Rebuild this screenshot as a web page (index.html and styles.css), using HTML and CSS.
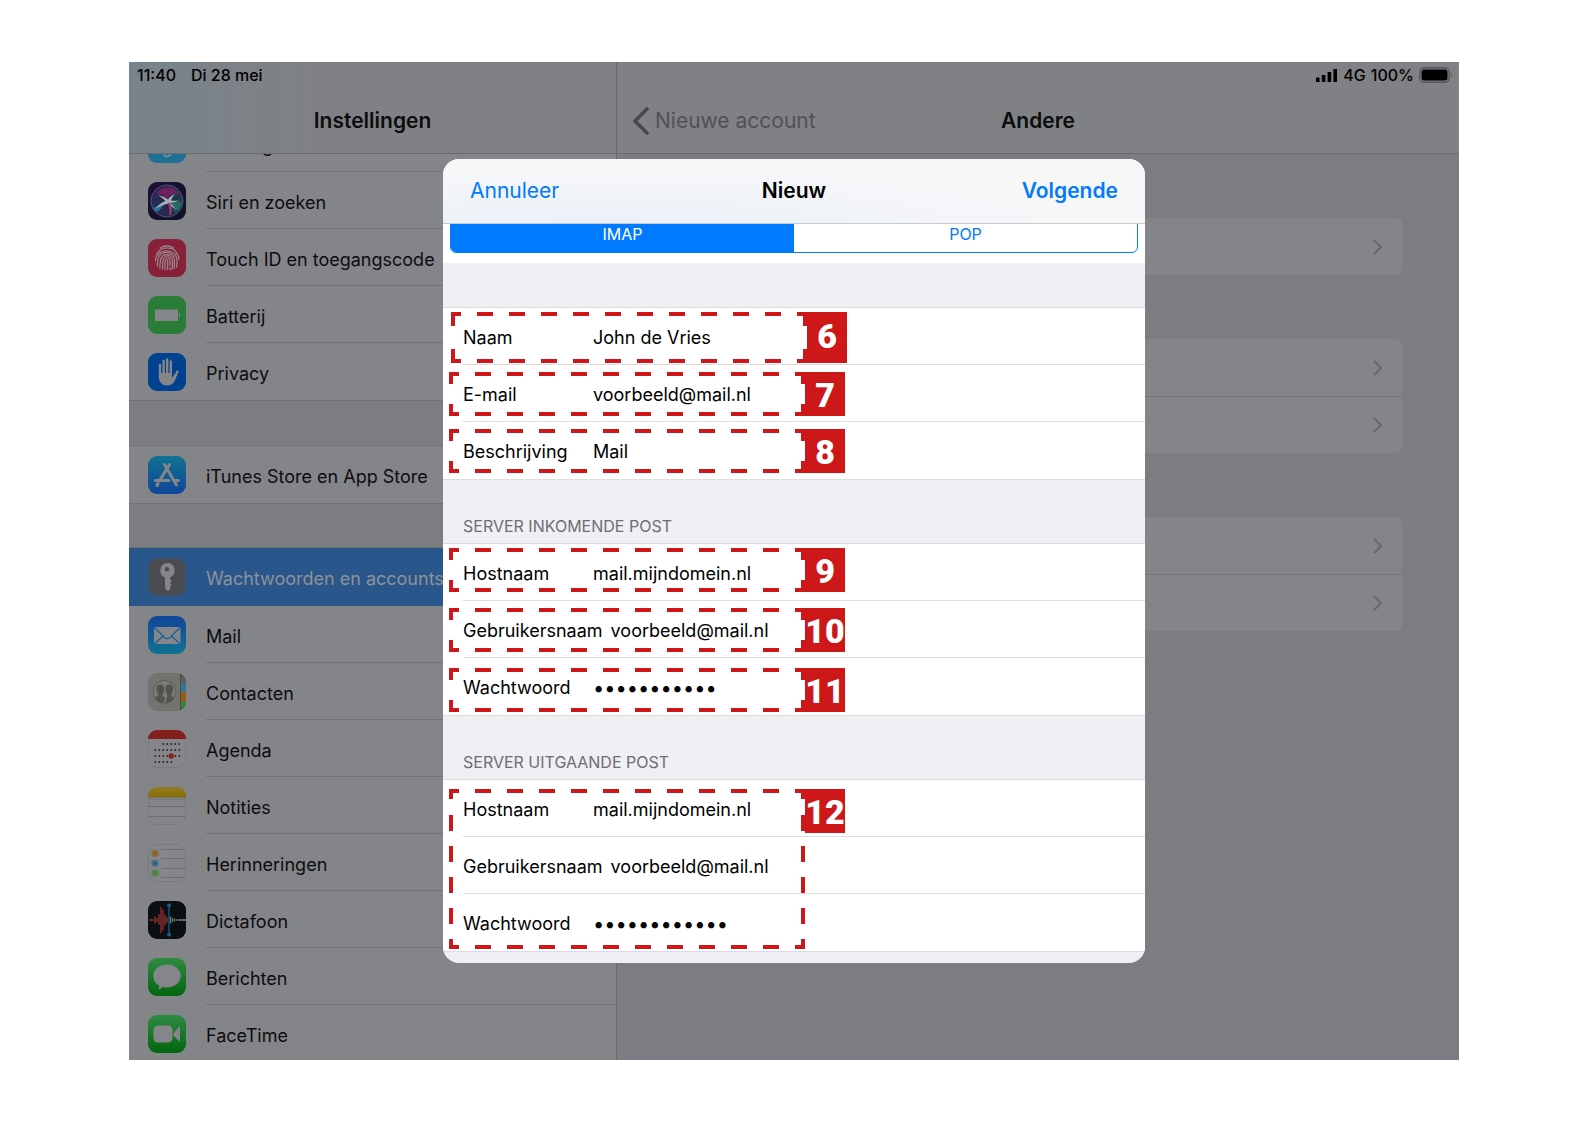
FILE: index.html
```html
<!DOCTYPE html>
<html lang="nl">
<head>
<meta charset="utf-8">
<meta name="viewport" content="width=device-width, initial-scale=1">
<title>Instellingen</title>
<link rel="stylesheet" href="styles.css">
</head>
<body>
<svg class="defs" aria-hidden="true">
  <defs>
    <linearGradient id="g-store" x1="0" y1="0" x2="0" y2="1"><stop offset="0" stop-color="#0f7391"/><stop offset="1" stop-color="#10459b"/></linearGradient>
    <linearGradient id="g-mail" x1="0" y1="0" x2="0" y2="1"><stop offset="0" stop-color="#10459b"/><stop offset="1" stop-color="#0f7391"/></linearGradient>
    <linearGradient id="g-green" x1="0" y1="0" x2="0" y2="1"><stop offset="0" stop-color="#2f8b42"/><stop offset="1" stop-color="#02650f"/></linearGradient>
    <linearGradient id="g-siri" x1="0" y1="0" x2="1" y2="1"><stop offset="0" stop-color="#1f0f35"/><stop offset="1" stop-color="#0a1326"/></linearGradient>
    <linearGradient id="g-orb" x1="0" y1="0" x2="1" y2="0"><stop offset="0" stop-color="#27407a"/><stop offset=".5" stop-color="#3a3560"/><stop offset="1" stop-color="#1c605c"/></linearGradient>
    <linearGradient id="g-note" x1="0" y1="0" x2="0" y2="1"><stop offset="0" stop-color="#8f7a26"/><stop offset="1" stop-color="#8c6f00"/></linearGradient>
    <clipPath id="tile"><rect width="38" height="38" rx="9"/></clipPath>
    <g id="box-small">
      <path d="M2 2H354M2 42H354" stroke-dasharray="16 16" stroke-dashoffset="8"/>
      <path d="M2 0V12M2 32V44M354 0V12M354 32V44M0 2H4M0 42H4M352 2H356M352 42H356"/>
    </g>
    <g id="box-first">
      <path d="M2 2H354M2 49H354" stroke-dasharray="16 16" stroke-dashoffset="8"/>
      <path d="M2 0V14M2 37V51M354 0V14M354 37V51"/>
    </g>
    <g id="box-large">
      <path d="M2 2H354M2 158H354" stroke-dasharray="16 16" stroke-dashoffset="8"/>
      <path d="M2 0V10M2 26V42M2 57V73M2 88V104M2 119V135M2 150V160M354 0V10M354 26V42M354 57V73M354 88V104M354 119V135M354 150V160"/>
    </g>
  </defs>
</svg>

<main class="device">
  <div class="status" role="status">
    <span>11:40</span><span>Di 28 mei</span>
    <span class="status-right">
      <svg width="23" height="14" viewBox="0 0 23 14"><path d="M1 9.500h3.600v4.500H1zM6.800 7h3.600v7H6.800zM12.600 4h3.600v10h-3.600zM18.400 1H22v13h-3.600z"/></svg>
      <span>4G</span><span>100%</span>
      <svg width="34" height="16" viewBox="0 0 34 16"><rect x=".8" y=".8" width="29.400" height="14.400" rx="4" fill="none" stroke="#55565a" stroke-width="1.400"/><rect x="2.500" y="2.500" width="26" height="11" rx="2.500"/><path d="M31.800 5.500q2 2.500 0 5z" fill="#55565a"/></svg>
    </span>
  </div>

  <section class="sidebar">
    <header class="bar bar-tint"><h1>Instellingen</h1></header>
    <ul class="menu">
      <li class="cut"><a href="#"><svg class="icon" viewBox="0 0 38 38"><rect width="38" height="38" rx="9" fill="#1f7094"/><circle cx="19" cy="28" r="3.500" fill="none" stroke="#85929a" stroke-width="1.500"/></svg><span>Achtergrond</span></a></li>
      <li><a href="#"><svg class="icon" viewBox="0 0 38 38"><rect width="38" height="38" rx="9" fill="url(#g-siri)"/><circle cx="19" cy="19" r="15.500" fill="url(#g-orb)" opacity=".6"/><path d="M8 12C13 4 27 2 33 14C27 9 20 12 19 18C15 12 11 11 8 12z" fill="#7c2060" opacity=".85"/><path d="M4 26C9 25 14 21 19 17C14 26 11 30 8 30z" fill="#2a7d9c" opacity=".8"/><path d="M20 17C24 20 29 22 34 19C33 26 30 29 27 30C26 25 23 21 20 17z" fill="#27776f" opacity=".8"/><path d="M10 13Q16 14 20 17.500Q22 14 27 12Q23.500 15.500 23 18.500Q28 19 32 18.500Q27 21 22.500 20.500Q24.500 24 28 27Q22.500 24.500 20.500 21.500Q15 22.500 7 27Q12 21 17.500 19Q14 15.500 10 13z" fill="#a3b0b8"/><path d="M20.500 21Q22.500 26 22 33Q24.500 29 22 21z" fill="#a33b80" stroke="#a33b80"/><circle cx="19" cy="19" r="16" fill="none" stroke="#5c5578" stroke-width="1"/></svg><span>Siri en zoeken</span></a></li>
      <li><a href="#"><svg class="icon" viewBox="0 0 38 38"><rect width="38" height="38" rx="9" fill="#89203a"/><g fill="none" stroke="#94868c" stroke-width="1.300" stroke-linecap="round"><path d="M12.500 9Q19 4.500 25.500 9"/><path d="M8.500 15.500C13 6.500 26 7 29.500 15.500Q31 18.500 31 20.500"/><path d="M7.500 21.500C8 9 29 8 29 22Q29 25.500 28.500 28"/><path d="M9.500 27C9 24 10 21 10 20.500C11.500 10.500 26.500 11 26.500 22Q26.500 27 26 29.500"/><path d="M12 29C11.500 26 12.500 23 12.500 21.500C13.500 13.500 24.500 14 24.500 22Q24.500 26 24 30"/><path d="M14.500 30Q14.500 25 15 21.500C16 16.500 22 16.500 22 22V26"/><path d="M17 30.500Q17 25 17.300 22C17.700 19.500 19.700 20 19.700 22Q19.700 27 19.500 30.500"/><path d="M22 29V30.500"/></g></svg><span>Touch ID en toegangscode</span></a></li>
      <li><a href="#"><svg class="icon" viewBox="0 0 38 38"><rect width="38" height="38" rx="9" fill="#297d39"/><path d="M7 13.500h23v11.500H7zM31 17q2.200 2.200 0 4.500z" fill="#85868a"/></svg><span>Batterij</span></a></li>
      <li class="last"><a href="#"><svg class="icon" viewBox="0 0 38 38"><rect width="38" height="38" rx="9" fill="#004190"/><g stroke="#85868a" stroke-width="2.400" stroke-linecap="round" fill="none"><path d="M12 12V22M15.600 8V21M19.200 6.500V21M22.800 8.500V21M29.500 18.500L26 26"/></g><path d="M10.800 20H24V25L27 20.500L28.500 21.500C27.500 28 25 32.500 19 32.500C13.500 32.500 10.800 28 10.800 24z" fill="#85868a"/></svg><span>Privacy</span></a></li>
      <li class="gap gap-store"></li>
      <li class="last"><a href="#"><svg class="icon" viewBox="0 0 38 38"><rect width="38" height="38" rx="9" fill="url(#g-store)"/><g stroke="#85868a" stroke-width="3" stroke-linecap="round" fill="none"><path d="M21.500 8.500L12 24M16.500 8.500L28.500 29M7.500 24.500H21M26.500 24.500H30.500"/><path d="M10 27.500L9 29.500"/></g></svg><span>iTunes Store en App Store</span></a></li>
      <li class="gap"></li>
      <li class="selected"><a href="#" aria-current="page"><svg class="icon" viewBox="0 0 38 38"><rect x=".5" y=".5" width="37" height="37" rx="9" fill="#4a4b50" stroke="#40526a"/><path fill-rule="evenodd" d="M19 5a7.500 7.500 0 0 1 3 14.400V21l1.800 2-1.800 2 1.800 2-1.800 2 .5 2-2.500 2-3-2.500V19.400A7.500 7.500 0 0 1 19 5zM19 9a2.300 2.300 0 1 0 .01 0z" fill="#85868a"/></svg><span>Wachtwoorden en accounts</span></a></li>
      <li><a href="#"><svg class="icon" viewBox="0 0 38 38"><rect width="38" height="38" rx="9" fill="url(#g-mail)"/><rect x="6" y="11" width="26.500" height="17" rx="2" fill="#85868a"/><path d="M7 12L16.500 21.500Q19.200 24 22 21.500L31.500 12M7 27.500L15 20M31.500 27.500L23.500 20" fill="none" stroke="#14609a" stroke-width="1.100"/></svg><span>Mail</span></a></li>
      <li><a href="#"><svg class="icon" viewBox="0 0 38 38"><g clip-path="url(#tile)"><path fill="#747370" d="M0 0h38v38H0z"/><path fill="#5d5c59" d="M32.500 0H38v10h-5.500z"/><path fill="#2f7795" d="M33 10h5v9h-5z"/><path fill="#96600a" d="M33 19.500h5v9h-5z"/><path fill="#2a823b" d="M33 29h5v9h-5z"/><path fill="#4c4b49" d="M32 0h1v38h-1z"/></g><circle cx="16.500" cy="19" r="11.500" fill="#7b7a77" stroke="#5b5a58" stroke-width="1"/><g fill="#53524f"><path d="M12 11.500c3 0 4.500 2 4 5.500-.3 2.500-1.500 3.500-1.500 5 0 1.700 2 2 3 3l-2 4.500C11 30 8 27.500 7 24.500c1.500-1 3.500-1.200 3.500-2.500 0-1.500-1.700-2.500-2-5-.5-3.500 1-5.500 3.500-5.500z"/><path d="M21 11.500c3 0 4.500 2 4 5.500-.3 2.500-1.500 3.500-1.500 5 0 1 1.500 1.700 2.500 2.500-1.500 3-4.500 5.500-8.500 5.500l1-4 1-3c0-1.500-1.700-3-2-6-.3-3.500 1-5.500 3.500-5.500z"/></g></svg><span>Contacten</span></a></li>
      <li><a href="#"><svg class="icon" viewBox="0 0 38 38"><rect x=".5" y=".5" width="37" height="37" rx="9" fill="#85868a" stroke="#797a7e"/><path d="M0 9a9 9 0 0 1 9-9h20a9 9 0 0 1 9 9z" fill="#83201c"/><g stroke="#17181a" stroke-width="1.600" stroke-dasharray="1.600 2.400" fill="none"><path d="M14.500 14h18M6.500 20h26M6.500 26h26M6.500 32h18"/></g><circle cx="23.200" cy="26" r="2.700" fill="#90201c"/></svg><span>Agenda</span></a></li>
      <li><a href="#"><svg class="icon" viewBox="0 0 38 38"><rect x=".5" y=".5" width="37" height="37" rx="9" fill="#85868a" stroke="#797a7e"/><path d="M0 10V9a9 9 0 0 1 9-9h20a9 9 0 0 1 9 9v1z" fill="url(#g-note)"/><path d="M0 10.500H38M0 19.500H38M0 29.500H38" stroke="#6d6e72"/><path d="M1 12.500H38" stroke="#6d6e72" stroke-dasharray="1 1"/></svg><span>Notities</span></a></li>
      <li><a href="#"><svg class="icon" viewBox="0 0 38 38"><rect x=".5" y=".5" width="37" height="37" rx="9" fill="#85868a" stroke="#797a7e"/><path d="M13.500 5.500H37M13.500 14.500H38M13.500 24.500H38M13.500 33.500H36" stroke="#6d6e72"/><g><circle cx="7" cy="9.500" r="2.700" fill="#915b14" stroke="#876e48" stroke-width="2"/><circle cx="7" cy="19.300" r="2.700" fill="#14618c" stroke="#4a7288" stroke-width="2"/><circle cx="7" cy="29" r="2.700" fill="#3b8c2a" stroke="#5b8453" stroke-width="2"/></g></svg><span>Herinneringen</span></a></li>
      <li><a href="#"><svg class="icon" viewBox="0 0 38 38"><rect width="38" height="38" rx="9" fill="#0c0f12"/><path d="M1 19h3M5 18v2M7 15.500v7M9 17v4M11 13v11M13 6v26M15 9v20M17 13.500v11M19 16v6" stroke="#8a2f2d" stroke-width="1.400" fill="none"/><path d="M22.500 15.500v7M24.500 17v4M26.500 17.500v3M28.500 18v2M30 19h8M36 18v2" stroke="#77787b" stroke-width="1.300" fill="none"/><path d="M21 4.500v29" stroke="#12608f" stroke-width="1.300"/><circle cx="21" cy="4.500" r="2" fill="#12608f"/><circle cx="21" cy="33.500" r="2" fill="#12608f"/></svg><span>Dictafoon</span></a></li>
      <li><a href="#"><svg class="icon" viewBox="0 0 38 38"><rect width="38" height="38" rx="9" fill="url(#g-green)"/><path d="M19 6.500c7.700 0 13.700 5 13.700 11.500S26.700 29.500 19 29.500c-1.500 0-3-.2-4.300-.5-1.200 1.300-3 2.200-5 2.500 1-.9 1.700-2.200 1.800-3.700C7.700 25.700 5.300 22.200 5.300 18 5.300 11.500 11.300 6.500 19 6.500z" fill="#85868a"/></svg><span>Berichten</span></a></li>
      <li class="bottom"><a href="#"><svg class="icon" viewBox="0 0 38 38"><rect width="38" height="38" rx="9" fill="url(#g-green)"/><rect x="5.500" y="10.500" width="19" height="17" rx="4.500" fill="#85868a"/><path d="M25.500 18L31 12q1-.8 1 .8V25.200q0 1.600-1 .8L25.500 20.500z" fill="#85868a"/></svg><span>FaceTime</span></a></li>
    </ul>
  </section>

  <section class="detail">
    <header class="bar">
      <a class="back" href="#"><svg width="18" height="28" viewBox="0 0 18 28"><path d="M15 2L3 14L15 26" fill="none" stroke="#47484b" stroke-width="3.600" stroke-linecap="round" stroke-linejoin="round"/></svg>Nieuwe account</a>
      <h2>Andere</h2>
    </header>
    <div class="cards">
      <div class="card"><a href="#" aria-label="Open"><svg class="chev" viewBox="0 0 12 18"><path d="M2 2L9 9L2 16"/></svg></a></div>
      <div class="card"><a href="#" aria-label="Open"><svg class="chev" viewBox="0 0 12 18"><path d="M2 2L9 9L2 16"/></svg></a><a href="#" aria-label="Open"><svg class="chev" viewBox="0 0 12 18"><path d="M2 2L9 9L2 16"/></svg></a></div>
      <div class="card"><a href="#" aria-label="Open"><svg class="chev" viewBox="0 0 12 18"><path d="M2 2L9 9L2 16"/></svg></a><a href="#" aria-label="Open"><svg class="chev" viewBox="0 0 12 18"><path d="M2 2L9 9L2 16"/></svg></a></div>
    </div>
  </section>

  <form class="modal" role="dialog" aria-labelledby="dlg-title">
    <header class="modal-bar">
      <button type="button">Annuleer</button>
      <h2 id="dlg-title">Nieuw</h2>
      <button type="button" class="next">Volgende</button>
    </header>
    <div class="segment-wrap">
      <div class="segment"><button type="button" class="on" aria-pressed="true">IMAP</button><button type="button" aria-pressed="false">POP</button></div>
    </div>

    <div class="group first">
      <div class="row"><label for="name">Naam</label><input id="name" type="text" value="John de Vries"></div>
      <div class="row"><label for="mail">E-mail</label><input id="mail" type="text" value="voorbeeld@mail.nl"></div>
      <div class="row"><label for="desc">Beschrijving</label><input id="desc" type="text" value="Mail"></div>
      <div class="note note-6"><svg width="356" height="51"><use href="#box-first"/></svg><b>6</b></div>
      <div class="note note-7"><svg width="356" height="44"><use href="#box-small"/></svg><b>7</b></div>
      <div class="note note-8"><svg width="356" height="44"><use href="#box-small"/></svg><b>8</b></div>
    </div>

    <h3>Server inkomende post</h3>
    <div class="group">
      <div class="row"><label for="in-host">Hostnaam</label><input id="in-host" type="text" value="mail.mijndomein.nl"></div>
      <div class="row"><label for="in-user">Gebruikersnaam</label><input id="in-user" type="text" value="voorbeeld@mail.nl"></div>
      <div class="row"><label for="in-pass">Wachtwoord</label><input id="in-pass" type="password" value="wachtwoord1"></div>
      <div class="note note-9"><svg width="356" height="44"><use href="#box-small"/></svg><b>9</b></div>
      <div class="note note-10"><svg width="356" height="44"><use href="#box-small"/></svg><b>10</b></div>
      <div class="note note-11"><svg width="356" height="44"><use href="#box-small"/></svg><b>11</b></div>
    </div>

    <h3>Server uitgaande post</h3>
    <div class="group">
      <div class="row"><label for="out-host">Hostnaam</label><input id="out-host" type="text" value="mail.mijndomein.nl"></div>
      <div class="row"><label for="out-user">Gebruikersnaam</label><input id="out-user" type="text" value="voorbeeld@mail.nl"></div>
      <div class="row"><label for="out-pass">Wachtwoord</label><input id="out-pass" type="password" value="wachtwoord12"></div>
      <div class="note note-12"><svg width="356" height="160"><use href="#box-large"/></svg><b>12</b></div>
    </div>
  </form>
</main>
</body>
</html>
```
FILE: styles.css
```css
* { box-sizing: border-box; }

body {
  margin: 0;
  padding: 62px 128px 62px 129px;
  background: #fff;
  color: #0c0d0f;
  font: 18px/24px Inter, "Liberation Sans", sans-serif;
}

a { color: inherit; text-decoration: none; }
h1, h2, h3, ul { margin: 0; padding: 0; }
h1, h2 { font-size: 21px; line-height: 28px; font-weight: 600; }
button { border: 0; padding: 0; background: none; font: inherit; color: #007aff; }
.defs { position: absolute; width: 0; height: 0; }

.device {
  position: relative;
  display: grid;
  grid-template-columns: 488px 1fr;
  background: #7c7d82;
}

/* status line over both panes */
.status {
  position: absolute;
  inset: 0 0 auto 0;
  display: flex;
  align-items: center;
  gap: 15px;
  height: 26px;
  padding: 0 6px 0 8px;
  font-size: 16px;
  font-weight: 500;
  color: #000;
}
.status-right { display: flex; align-items: center; gap: 5px; margin-left: auto; }

.bar {
  height: 92px;
  padding-top: 45px;
  background: #808184;
  border-bottom: 1px solid #6a6b6f;
  text-align: center;
}
.bar-tint { background: linear-gradient(90deg, #77838b, #7b8389 16%, #808184 40%); }

.sidebar { border-right: 1px solid #68696d; }

.menu { list-style: none; overflow: hidden; }
.menu li { background: #848588; }
.menu a {
  display: flex;
  align-items: center;
  gap: 20px;
  height: 57px;
  padding-left: 19px;
}
.menu span {
  flex: 1;
  height: 57px;
  padding-top: 19px;
  border-bottom: 1px solid #727377;
}
.menu .cut { margin-top: -39px; }
.menu .bottom { margin-bottom: -2px; }
.menu .last span, .menu .bottom span, .menu .selected span { border-color: transparent; }
.menu .gap { height: 45px; background: #7c7d82; border: solid #707175; border-width: 1px 0; }
.menu .gap-store { height: 46px; }
.menu .selected { background: #29578b; color: #8f9296; padding-bottom: 1px; }
.icon { width: 38px; height: 38px; }

.detail .bar {
  display: grid;
  grid-template-columns: 1fr auto 1fr;
}
.back {
  display: flex;
  align-items: center;
  gap: 5px;
  height: 28px;
  padding-left: 15px;
  font-size: 21px;
  color: #505155;
}
.cards { display: grid; gap: 64px; padding: 64px 57px; }
.card { border-radius: 6px; background: #848588; }
.card a {
  display: flex;
  align-items: center;
  justify-content: flex-end;
  height: 57px;
  padding-right: 18px;
}
.card a + a { border-top: 1px solid #747579; }
.chev { width: 12px; height: 18px; fill: none; stroke: #67686b; stroke-width: 2; }

/* dialog */
.modal {
  position: absolute;
  top: 97px;
  left: 50%;
  width: 702px;
  max-width: 100%;
  transform: translateX(-50%);
  padding-bottom: 12px;
  border-radius: 16px;
  overflow: hidden;
  background: #efeff4;
  color: #000;
}
.modal-bar {
  position: relative;
  z-index: 1;
  display: grid;
  grid-template-columns: 1fr auto 1fr;
  align-items: center;
  height: 65px;
  padding: 0 27px;
  background: radial-gradient(ellipse at 22% 120%, #e6f0f8, #f3f5f9 45%, #f7f7f8 70%);
  border-bottom: 1px solid #c9cacc;
}
.modal-bar button { justify-self: start; font-size: 21px; }
.modal-bar .next { justify-self: end; font-weight: 600; }

.segment-wrap { display: flow-root; padding: 0 7px 10px; background: #fff; }
.segment {
  display: grid;
  grid-template-columns: 1fr 1fr;
  height: 38px;
  margin-top: -9px;
  border: 1px solid #007aff;
  border-radius: 6px;
  overflow: hidden;
}
.segment button { font-size: 16px; }
.segment .on { background: #007aff; color: #fff; }

.group {
  position: relative;
  padding-left: 20px;
  background: #fff;
  box-shadow: 0 -1px #dcdce0, 0 1px #dcdce0;
}
.group.first { margin-top: 45px; }
.row {
  display: flex;
  align-items: center;
  gap: 8px;
  height: 57px;
  padding-top: 4px;
  border-bottom: 1px solid #dededf;
}
.row:nth-child(3) { border-color: transparent; }
.row label { min-width: 122px; }
.row input {
  flex: 1;
  min-width: 0;
  padding: 0;
  border: 0;
  background: none;
  font: inherit;
  color: #000;
}
.row input[type="password"] { font-size: 20px; }

h3 {
  height: 65px;
  padding: 35px 20px 0;
  font-size: 16px;
  font-weight: 400;
  color: #6d6d72;
  text-transform: uppercase;
}

/* numbered callouts over the form */
.note {
  position: absolute;
  left: 6px;
  display: flex;
  align-items: flex-start;
  pointer-events: none;
}
.note svg { fill: none; stroke: #cd1719; stroke-width: 4; }
.note b {
  width: 40px;
  height: 44px;
  background: #cd1719;
  color: #fff;
  font: 900 34px/46px Roboto, sans-serif;
  text-align: center;
}
.note-6 { top: 4px; left: 8px; }
.note-6 b { height: 51px; line-height: 48px; }
.note-7 { top: 64px; }
.note-8 { top: 121px; }
.note-9 { top: 4px; }
.note-10 { top: 64px; }
.note-11 { top: 124px; }
.note-12 { top: 9px; }
```
